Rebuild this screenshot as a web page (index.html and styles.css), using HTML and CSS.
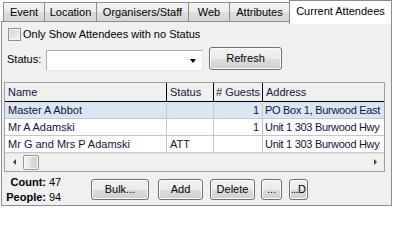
FILE: index.html
```html
<!DOCTYPE html>
<html>
<head>
<meta charset="utf-8">
<link rel="stylesheet" href="styles.css">
</head>
<body>
<div class="tabs">
  <div class="tab t-event">Event</div>
  <div class="tab t-loc">Location</div>
  <div class="tab t-org">Organisers/Staff</div>
  <div class="tab t-web">Web</div>
  <div class="tab t-attr">Attributes</div>
  <div class="tab tab-active t-cur">Current Attendees</div>
</div>
<div class="panel">
  <div class="only-row">
    <span class="checkbox"></span>
    <span class="only-label">Only Show Attendees with no Status</span>
  </div>
  <div class="status-row">
    <span class="status-label">Status:</span>
    <div class="combo"><span class="combo-arrow"></span></div>
    <div class="btn btn-refresh">Refresh</div>
  </div>
  <div class="grid">
    <div class="grid-body">
      <div class="cell head">Name</div>
      <div class="cell head">Status</div>
      <div class="cell head num-head"># Guests</div>
      <div class="cell head">Address</div>

      <div class="cell sel">Master A Abbot</div>
      <div class="cell sel"></div>
      <div class="cell sel num">1</div>
      <div class="cell sel addr">PO Box 1, Burwood East</div>

      <div class="cell">Mr A Adamski</div>
      <div class="cell"></div>
      <div class="cell num">1</div>
      <div class="cell addr">Unit 1 303 Burwood Hwy</div>

      <div class="cell">Mr G and Mrs P Adamski</div>
      <div class="cell">ATT</div>
      <div class="cell num"></div>
      <div class="cell addr">Unit 1 303 Burwood Hwy</div>
    </div>
    <div class="hscroll">
      <span class="arrow-left"></span>
      <span class="thumb"></span>
      <span class="track"></span>
      <span class="arrow-right"></span>
    </div>
  </div>
  <div class="footer">
    <div class="counts">
      <span class="c-label">Count:</span><span class="c-val">47</span>
      <span class="c-label">People:</span><span class="c-val">94</span>
    </div>
    <div class="btn b-bulk">Bulk...</div>
    <div class="btn b-add">Add</div>
    <div class="btn b-del">Delete</div>
    <div class="btn b-dots">...</div>
    <div class="btn b-dotsd">...D</div>
  </div>
</div>
</body>
</html>
```
FILE: styles.css
```css
* { box-sizing: border-box; }
html, body {
  margin: 0;
  padding: 0;
  background: #ffffff;
  width: 393px;
  height: 206px;
  overflow: hidden;
}
body {
  font-family: "Liberation Sans", Arial, sans-serif;
  font-size: 11px;
  color: #000;
}

/* Tabs */
.tabs {
  display: flex;
  height: 21px;
  padding-left: 3px;
  position: relative;
  z-index: 2;
}
.tab {
  margin-top: 2px;
  height: 19px;
  border: 1px solid #898c95;
  border-bottom: none;
  margin-right: -1px;
  background: linear-gradient(#f3f3f3, #ebebeb 50%, #dddddd 51%, #d6d6d6);
  text-align: center;
  line-height: 19px;
  white-space: nowrap;
}
.t-event { width: 42px; }
.t-loc { width: 53px; }
.t-org { width: 93px; }
.t-web { width: 42px; }
.t-attr { width: 61px; }
.tab-active {
  margin-top: 0;
  height: 24px;
  width: 103px;
  background: #ffffff;
  line-height: 20px;
}

/* Panel */
.panel {
  margin-left: 1px;
  width: 391px;
  height: 185px;
  border: 1px solid #898c95;
  background: #f0f0f0;
  position: relative;
  z-index: 1;
}

.only-row {
  display: flex;
  align-items: center;
  margin-top: 6px;
  padding-left: 6px;
  height: 13px;
}
.checkbox {
  width: 13px;
  height: 13px;
  border: 1px solid #8e8f8f;
  background: linear-gradient(135deg, #d0d0d0, #f6f6f6);
  box-shadow: inset 0 0 0 1px #f4f4f4;
}
.only-label {
  margin-left: 2px;
  line-height: 13px;
}

.status-row {
  display: flex;
  align-items: center;
  margin-top: 6px;
  height: 23px;
  padding-left: 5px;
}
.status-label {
  width: 39px;
}
.combo {
  width: 157px;
  height: 21px;
  margin-top: 3px;
  background: #fff;
  border: 1px solid #abadb3;
  border-right-color: #e3e9ef;
  border-bottom-color: #e3e9ef;
  position: relative;
}
.combo-arrow {
  position: absolute;
  right: 6px;
  top: 8px;
  width: 0;
  height: 0;
  border-left: 3.5px solid transparent;
  border-right: 3.5px solid transparent;
  border-top: 4px solid #000;
}

.btn {
  height: 21px;
  border: 1px solid #707070;
  border-radius: 3px;
  background: linear-gradient(#f2f2f2, #ebebeb 50%, #dddddd 51%, #cfcfcf);
  box-shadow: inset 0 0 0 1px #fcfcfc;
  text-align: center;
  line-height: 19px;
  white-space: nowrap;
}
.btn-refresh {
  width: 73px;
  height: 23px;
  line-height: 21px;
  margin-left: 6px;
}

/* Grid */
.grid {
  margin-top: 12px;
  margin-left: 2px;
  width: 381px;
  height: 90px;
  border: 1px solid #a0a0a0;
  background: #f0f0f0;
  display: flex;
  flex-direction: column;
}
.grid-body {
  display: grid;
  grid-template-columns: 162px 47px 49px 121px;
  grid-auto-rows: 17px;
  grid-template-rows: 19px;
  color: #14143a;
}
.cell {
  border-right: 1px solid #c8c8c8;
  border-bottom: 1px solid #c8c8c8;
  background: #fff;
  padding-left: 3px;
  line-height: 16px;
  white-space: nowrap;
  overflow: hidden;
}
.cell:nth-child(4n) { border-right: none; }
.addr {
  padding-left: 2px;
  letter-spacing: -0.3px;
}
.head {
  background: #f0f0f0;
  border-right: 1px solid #000;
  border-bottom: 1px solid #000;
  line-height: 19px;
  padding-top: 0;
}
.head.num-head { padding-left: 2px; }
.sel { background: #dae6f4; }
.num { text-align: right; padding-right: 3px; }

.hscroll {
  height: 17px;
  display: flex;
  align-items: center;
  background: #f0f0f0;
  border-top: 1px solid #e6e6e6;
}
.arrow-left {
  margin-left: 8px;
  width: 0;
  height: 0;
  border-top: 3px solid transparent;
  border-bottom: 3px solid transparent;
  border-right: 3px solid #444;
}
.thumb {
  margin-left: 7px;
  width: 16px;
  height: 15px;
  border: 1px solid #979797;
  border-radius: 2px;
  background: linear-gradient(90deg, #f3f3f3, #e6e6e6 50%, #d9d9d9 51%, #d2d2d2);
  box-shadow: inset 0 0 0 1px #f8f8f8;
}
.track { flex: 1; }
.arrow-right {
  margin-right: 7px;
  width: 0;
  height: 0;
  border-top: 3px solid transparent;
  border-bottom: 3px solid transparent;
  border-left: 3px solid #444;
}

/* Footer */
.footer {
  display: flex;
  align-items: flex-start;
}
.counts {
  width: 89px;
  display: grid;
  grid-template-columns: 44px auto;
  grid-auto-rows: 15px;
  padding-top: 3px;
  line-height: 15px;
}
.c-label {
  font-weight: bold;
  text-align: right;
}
.c-val { margin-left: 3px; }
.footer .btn { margin-top: 7px; }
.b-bulk { width: 58px; }
.b-add { width: 45px; margin-left: 9px; }
.b-del { width: 45px; margin-left: 7px; }
.b-dots { width: 21px; margin-left: 6px; }
.b-dotsd {
  width: 19px;
  margin-left: 7px;
  letter-spacing: -0.6px;
  text-indent: -1px;
}
```
